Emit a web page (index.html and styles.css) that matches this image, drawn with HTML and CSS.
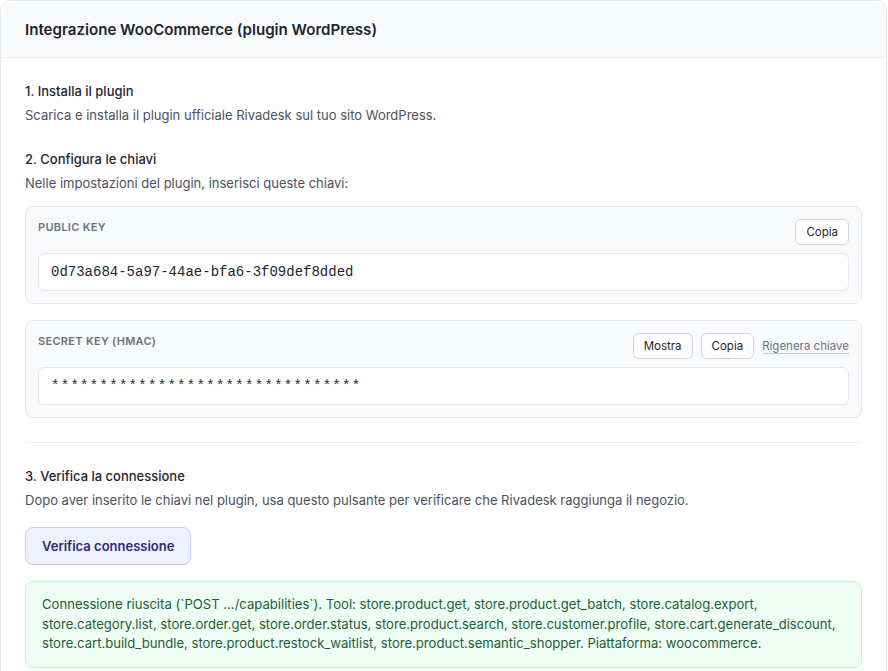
FILE: index.html
```html
<!DOCTYPE html>
<html lang="it">
<head>
    <meta charset="UTF-8">
    <meta name="viewport" content="width=device-width, initial-scale=1.0">
    <title>Integrazione WooCommerce</title>
    <link rel="stylesheet" href="styles.css">
</head>
<body>
    <div class="card">
        <div class="card-header">
            <h2>Integrazione WooCommerce (plugin WordPress)</h2>
        </div>
        <div class="card-body">
            <div class="step">
                <h3>1. Installa il plugin</h3>
                <p>Scarica e installa il plugin ufficiale Rivadesk sul tuo sito WordPress.</p>
            </div>
            <div class="step">
                <h3>2. Configura le chiavi</h3>
                <p>Nelle impostazioni del plugin, inserisci queste chiavi:</p>
            </div>
            <div class="key-box">
                <div class="key-head">
                    <span class="key-label">Public key</span>
                    <div class="key-actions">
                        <button class="btn">Copia</button>
                    </div>
                </div>
                <div class="key-value">0d73a684-5a97-44ae-bfa6-3f09def8dded</div>
            </div>
            <div class="key-box">
                <div class="key-head">
                    <span class="key-label">Secret key (HMAC)</span>
                    <div class="key-actions">
                        <button class="btn">Mostra</button>
                        <button class="btn">Copia</button>
                        <a href="#" class="link">Rigenera chiave</a>
                    </div>
                </div>
                <div class="key-value masked">********************************</div>
            </div>
            <hr class="divider">
            <div class="step step-last">
                <h3>3. Verifica la connessione</h3>
                <p>Dopo aver inserito le chiavi nel plugin, usa questo pulsante per verificare che Rivadesk raggiunga il negozio.</p>
            </div>
            <button class="btn-verify">Verifica connessione</button>
            <div class="alert-success">
                Connessione riuscita (`POST .../capabilities`). Tool: store.product.get, store.product.get_batch, store.catalog.export, store.category.list, store.order.get, store.order.status, store.product.search, store.customer.profile, store.cart.generate_discount, store.cart.build_bundle, store.product.restock_waitlist, store.product.semantic_shopper. Piattaforma: woocommerce.
            </div>
        </div>
    </div>
</body>
</html>
```

FILE: styles.css
```css
body {
    font-family: Inter, "Noto Sans", sans-serif;
    margin: 0;
    padding: 0;
    background: #ffffff;
    color: #111827;
}
.card {
    width: 885px;
    border: 1px solid #e5e7eb;
    border-radius: 10px;
    background: #ffffff;
    overflow: hidden;
}
.card-header {
    background: #f9fafb;
    border-bottom: 1px solid #eef0f3;
    height: 56px;
    padding: 0 24px;
    display: flex;
    align-items: center;
}
.card-header h2 {
    margin: 0;
    font-size: 15.1px;
    font-weight: 600;
    color: #1f2430;
}
.card-body {
    padding: 24px 24px 20px;
}
.step {
    margin-bottom: 14px;
}
.step + .step {
    margin-top: 26px;
}
.step-last {
    margin-bottom: 18px;
}
.step h3 {
    margin: 0 0 6px;
    font-size: 13px;
    font-weight: 500;
    color: #1f2430;
    line-height: 18px;
}
.step p {
    margin: 0;
    font-size: 13px;
    color: #4b5260;
    line-height: 18px;
}
.key-box {
    background: #f9fafb;
    border: 1px solid #e5e7eb;
    border-radius: 8px;
    padding: 12px;
    margin-bottom: 16px;
}
.key-head {
    display: flex;
    justify-content: space-between;
    align-items: flex-start;
    margin-bottom: 8px;
}
.key-label {
    font-size: 11px;
    line-height: 14px;
    font-weight: 600;
    text-transform: uppercase;
    letter-spacing: 0.3px;
    color: #6b7280;
    margin-top: 1px;
}
.key-actions {
    display: flex;
    gap: 8px;
    align-items: center;
}
.btn {
    font-family: inherit;
    font-size: 11.5px;
    color: #1f2430;
    background: #ffffff;
    border: 1px solid #d1d5db;
    border-radius: 6px;
    height: 26px;
    padding: 0 10px;
    cursor: pointer;
}
.link {
    font-size: 11.5px;
    color: #6b7280;
    text-decoration: underline;
    text-decoration-color: #c3c7cf;
    text-underline-offset: 3px;
}
.key-value {
    background: #ffffff;
    border: 1px solid #e5e7eb;
    border-radius: 6px;
    height: 36px;
    padding: 0 12px;
    display: flex;
    align-items: center;
    font-family: "Liberation Mono", "DejaVu Sans Mono", monospace;
    font-size: 14px;
    color: #1f2430;
}
.masked {
    letter-spacing: 1.3px;
}
.divider {
    border: none;
    border-top: 1px solid #eceef1;
    margin: 24px 0 24px;
}
.btn-verify {
    font-family: inherit;
    font-size: 13px;
    font-weight: 600;
    color: #2e2a6e;
    background: #eef0fe;
    border: 1px solid #c7cdf3;
    border-radius: 8px;
    height: 38px;
    padding: 0 16px;
    cursor: pointer;
    margin-bottom: 16px;
}
.alert-success {
    background: #f0fdf4;
    border: 1px solid #bbf7d0;
    border-radius: 8px;
    padding: 13px 16px;
    font-size: 13.1px;
    line-height: 19.5px;
    color: #1d5e37;
}
```
